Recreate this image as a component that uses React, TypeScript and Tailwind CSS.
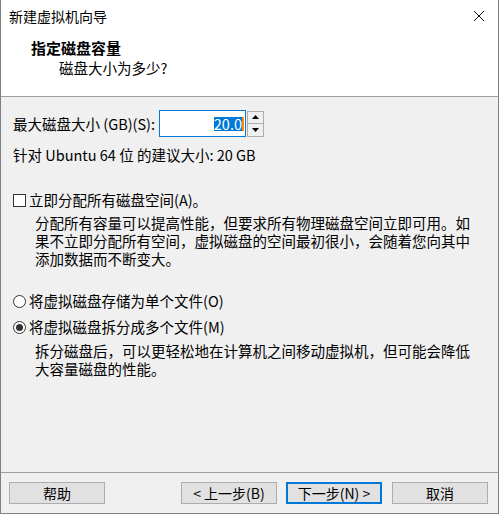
import React from 'react'

const font = { fontFamily: '"Noto Sans CJK SC", "Noto Sans", sans-serif' }

function Btn({ label, primary = false }: { label: string; primary?: boolean }) {
  return (
    <button
      type="button"
      className={`w-[96px] h-[22px] bg-[#e1e1e1] text-[14px] leading-none text-black flex items-center justify-center ${
        primary ? 'border-2 border-[#0078d7]' : 'border border-[#adadad]'
      }`}
    >
      {label}
    </button>
  )
}

function Radio({ checked }: { checked?: boolean }) {
  return (
    <span className="w-[13px] h-[13px] rounded-full border border-[#333] bg-white flex items-center justify-center shrink-0">
      {checked && <span className="w-[7px] h-[7px] rounded-full bg-[#333]" />}
    </span>
  )
}

export default function App() {
  return (
    <div
      style={font}
      className="w-[499px] h-[514px] flex flex-col bg-[#f0f0f0] border-x border-b border-[#808080] text-black overflow-hidden"
    >
      {/* title bar */}
      <div className="h-[32px] bg-white flex items-center justify-between pl-[8px] pr-[12px]">
        <span className="text-[14px]">新建虚拟机向导</span>
        <svg width="12" height="12" viewBox="0 0 12 12" className="mr-[1px]">
          <path d="M1 1 L11 11 M11 1 L1 11" stroke="#111" strokeWidth="1" />
        </svg>
      </div>

      {/* header */}
      <div className="h-[65px] bg-white border-b border-[#a0a0a0] pl-[30px] pt-[6px]">
        <div className="h-[20px] flex items-center text-[15px] font-bold">指定磁盘容量</div>
        <div className="h-[20px] flex items-center text-[14.5px] pl-[28px]">磁盘大小为多少?</div>
      </div>

      {/* body */}
      <div className="flex-1 flex flex-col px-[12px] text-[14.5px]">
        <div className="mt-[13px] h-[27px] flex items-center">
          <span className="w-[146px]">最大磁盘大小 (GB)(S):</span>
          <div className="w-[87px] h-[27px] bg-white border border-[#0078d7] flex items-center justify-end pr-[1px]">
            <span className="bg-[#0078d7] text-white leading-[13px] h-[14px] px-[0px]">20.0</span>
            <span className="w-[2px] h-[14px] bg-[#ff8c00]" />
          </div>
          <div className="ml-[1px] w-[17px] h-[26px] flex flex-col border border-[#adadad] bg-[#f0f0f0]">
            <div className="flex-1 flex items-center justify-center border-b border-[#adadad]">
              <svg width="7" height="4" viewBox="0 0 7 4"><path d="M3.5 0 L7 4 L0 4 Z" fill="#000" /></svg>
            </div>
            <div className="flex-1 flex items-center justify-center">
              <svg width="7" height="4" viewBox="0 0 7 4"><path d="M0 0 L7 0 L3.5 4 Z" fill="#000" /></svg>
            </div>
          </div>
        </div>

        <div className="mt-[8px] h-[20px] flex items-center">针对 Ubuntu 64 位 的建议大小: 20 GB</div>

        <div className="mt-[25px] h-[20px] flex items-center gap-[3px]">
          <span className="w-[13px] h-[13px] border border-[#333] bg-white shrink-0" />
          <span>立即分配所有磁盘空间(A)。</span>
        </div>
        <p className="mt-[4px] pl-[22px] leading-[18px] w-[480px]">
          分配所有容量可以提高性能，但要求所有物理磁盘空间立即可用。如
          <br />
          果不立即分配所有空间，虚拟磁盘的空间最初很小，会随着您向其中
          <br />
          添加数据而不断变大。
        </p>

        <div className="mt-[23px] h-[20px] flex items-center gap-[3px]">
          <Radio />
          <span>将虚拟磁盘存储为单个文件(O)</span>
        </div>
        <div className="mt-[6px] h-[20px] flex items-center gap-[3px]">
          <Radio checked />
          <span>将虚拟磁盘拆分成多个文件(M)</span>
        </div>
        <p className="mt-[5px] pl-[22px] leading-[18px] w-[480px]">
          拆分磁盘后，可以更轻松地在计算机之间移动虚拟机，但可能会降低
          <br />
          大容量磁盘的性能。
        </p>
      </div>

      {/* footer */}
      <div className="h-[41px] border-t border-[#a0a0a0] pt-[9px] pl-[8px] pr-[10px] flex items-start">
        <Btn label="帮助" />
        <div className="ml-auto flex gap-[9px]">
          <Btn label="< 上一步(B)" />
          <Btn label="下一步(N) >" primary />
          <div className="ml-[1px]">
            <Btn label="取消" />
          </div>
        </div>
      </div>
    </div>
  )
}
